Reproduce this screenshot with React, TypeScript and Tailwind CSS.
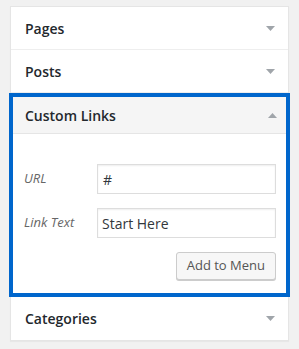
import React from 'react';

function Arrow({up = false}: {up?: boolean}) {
  return (
    <svg width="9" height="5" viewBox="0 0 9 5" className="shrink-0">
      {up ? (
        <polygon points="0,5 9,5 4.5,0" fill="#a0a5aa" />
      ) : (
        <polygon points="0,0 9,0 4.5,5" fill="#a0a5aa" />
      )}
    </svg>
  );
}

function Row({title, last = false}: {title: string; last?: boolean}) {
  return (
    <div
      className={`flex h-[43px] items-center justify-between pl-[14px] pr-[13px] ${
        last ? '' : 'border-b border-[#eeeeee]'
      }`}
    >
      <span className="text-[14px] font-semibold text-[#23282d]">{title}</span>
      <Arrow />
    </div>
  );
}

export default function App() {
  return (
    <div
      className="h-[349px] w-[299px] bg-[#f1f1f1] px-[10px] pt-[6px]"
      style={{fontFamily: '"Open Sans", "Noto Sans", sans-serif'}}
    >
      <div className="border border-[#e5e5e5] bg-white shadow-[0_1px_1px_rgba(0,0,0,0.04)]">
        <Row title="Pages" />
        <Row title="Posts" />

        {/* Custom links, highlighted */}
        <div className="-mx-[2px] border-4 border-[#0066cc]">
          <div className="flex h-[37px] items-center justify-between border-b border-[#e5e5e5] bg-[#f5f5f5] pl-[12px] pr-[9px]">
            <span className="text-[14px] font-semibold text-[#23282d]">Custom Links</span>
            <Arrow up />
          </div>
          <div className="flex flex-col gap-[14px] pl-[11px] pr-[10px] pb-[13px] pt-[30px]">
            <div className="flex items-center">
              <span className="w-[73px] text-[13px] italic text-[#666666]">URL</span>
              <div className="flex h-[30px] flex-1 items-center border border-[#dddddd] pl-[5px] text-[14px] text-[#32373c] shadow-[inset_0_1px_2px_rgba(0,0,0,0.07)]">
                #
              </div>
            </div>
            <div className="flex items-center">
              <span className="w-[73px] text-[13px] italic text-[#666666]">Link Text</span>
              <div className="flex h-[30px] flex-1 items-center border border-[#dddddd] pl-[4px] text-[14px] text-[#32373c] shadow-[inset_0_1px_2px_rgba(0,0,0,0.07)]">
                Start Here
              </div>
            </div>
            <div className="flex justify-end">
              <button className="h-[28px] rounded-[3px] border border-[#cccccc] bg-[#f7f7f7] px-[10px] text-[13px] text-[#555555] shadow-[0_1px_0_#cccccc]">
                Add to Menu
              </button>
            </div>
          </div>
        </div>

        <Row title="Categories" last />
      </div>
    </div>
  );
}
